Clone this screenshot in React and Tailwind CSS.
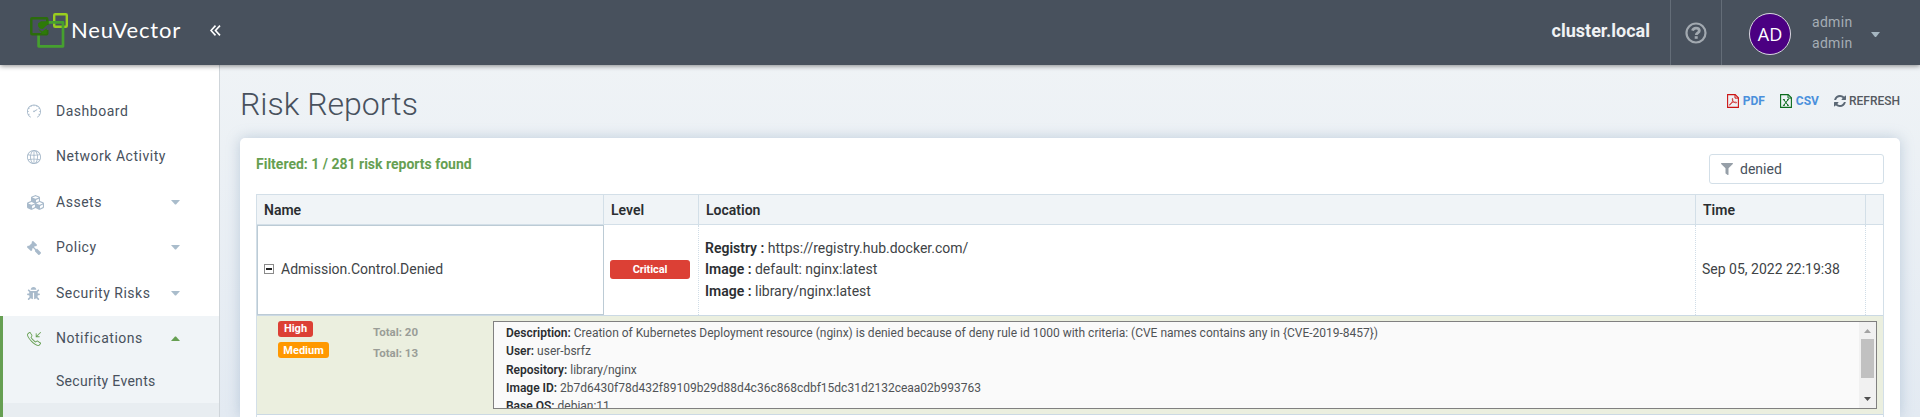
import React from "react";
import { FaCubes, FaGavel, FaBug, FaFilter } from "react-icons/fa";
import { SlSpeedometer, SlGlobe, SlCallIn } from "react-icons/sl";

function Logo() {
  return (
    <svg className="h-[36px] w-[38px] shrink-0" viewBox="0 0 38 36" fill="none">
      <rect x="24.2" y="1.2" width="12.6" height="12.6" rx="1" stroke="#9acd1f" strokeWidth="2.4" />
      <path d="M18 9.3H33V33.3H8.600V22" stroke="#46a02f" strokeWidth="2.7" strokeLinejoin="round" />
      <rect x="1.3" y="5.3" width="16" height="16" rx="0.8" stroke="#2b6c0c" strokeWidth="2.4" />
      <rect x="16" y="12" width="3" height="5" fill="#48515d" />
      <path d="M8 10.5l3-2.200h5.500l2-.6v3l-5.700 5.300-3.200-.4L8 13z" fill="#2d7a08" />
      <path d="M8 15.500l4.200 3 4.600-3.300v5.800h-4.600z" fill="#2d7a08" />
    </svg>
  );
}

function Caret({ up }) {
  return (
    <svg className={up ? "h-[5px] w-[9px] text-[#669f52]" : "h-[5px] w-[9px] text-[#a9bccb]"} viewBox="0 0 9 5">
      <path d={up ? "M0 5L4 0.500h1L9 5z" : "M0 0h9L5 4.500H4z"} fill="currentColor" />
    </svg>
  );
}

function HelpIcon() {
  return (
    <svg className="size-[22px]" viewBox="0 0 22 22" fill="none" stroke="#a2a9b0">
      <circle cx="11" cy="11" r="9.500" strokeWidth="2.2" />
      <path d="M7.500 8.700C8 6.900 9.300 6.100 11 6.100c1.900 0 3.300 1.100 3.300 2.700 0 2-3 2.200-3 4.200" strokeWidth="2.800" />
      <path d="M11.200 14.200v2.600" strokeWidth="3" />
    </svg>
  );
}

function FileIcon({ kind }) {
  const pdf = kind === "pdf";
  return (
    <svg className={pdf ? "mr-[4px] h-[14px] w-[12px] text-[#cc1414]" : "mr-[4px] h-[14px] w-[12px] text-[#0b6b1c]"} viewBox="0 0 12 14" fill="none" stroke="currentColor">
      <path d="M0.600 0.600h7.600l3.200 3.200v9.600H0.600z" strokeWidth="1.1" />
      <path d="M8 0.800v3.300h3.300" strokeWidth="1" />
      {pdf ? (
        <path d="M5.400 4.300c-.4 1 .2 2.500 1.200 3.500s2.100 1.300 3.100 1c.2-.9-2.300-.9-4-.4S2.500 10 2.400 11.200c1 .2 2.500-2.400 3.100-4.200.3-1.100.4-2.400-.1-2.700z" strokeWidth="0.7" />
      ) : (
        <path d="M3.800 5.700l4.200 5.600M8 5.700l-4.200 5.600M2.900 5.700h2M7 5.700h1.900M2.900 11.300h2M7 11.300h1.900" strokeWidth="1" />
      )}
    </svg>
  );
}

function NavItem({ icon, label, caret, up }) {
  return (
    <div className="flex h-[45.5px] items-center">
      <div className={up ? "flex w-[29px] shrink-0 text-[#669f52]" : "flex w-[29px] shrink-0 text-[#a8bacb]"}>{icon}</div>
      <div className="w-[115px] text-[14px] tracking-[0.52px] whitespace-nowrap text-[#48515d]">{label}</div>
      {caret && <Caret up={up} />}
    </div>
  );
}

function Sidebar() {
  return (
    <div className="flex w-[220px] shrink-0 flex-col border-r border-[#cfd5da] bg-white pt-[23.5px]">
      <div className="flex flex-col pl-[27px]">
        <NavItem icon={<SlSpeedometer className="size-[14px]" />} label="Dashboard" />
        <NavItem icon={<SlGlobe className="size-[14px]" />} label="Network Activity" />
        <NavItem icon={<FaCubes className="size-[17px]" />} label="Assets" caret />
        <NavItem icon={<FaGavel className="size-[14px] -scale-x-100" />} label="Policy" caret />
        <NavItem icon={<FaBug className="size-[13px]" />} label="Security Risks" caret />
      </div>
      <div className="flex flex-1 flex-col border-l-[3px] border-[#669f52] bg-[#f0f4f7]">
        <div className="flex h-[87px] flex-col pl-[24px]">
          <NavItem icon={<SlCallIn className="size-[14px]" />} label="Notifications" caret up />
          <div className="pt-[9.500px] pl-[29px] text-[14px] leading-[20px] tracking-[0.3px] text-[#48515d]">Security Events</div>
        </div>
        <div className="flex-1 bg-[#e8edf1]" />
      </div>
    </div>
  );
}

function Header() {
  return (
    <header className="relative z-10 flex h-[65px] shrink-0 bg-[#48515d] shadow-[0_1px_5px_rgba(0,0,0,0.45)]">
      <div className="flex items-start pt-[13px] pl-[30px]">
        <Logo />
        <span className="ml-[3px] pt-[3px] font-[Lato] text-[22px] leading-[28px] tracking-[0.8px] text-white">NeuVector</span>
        <svg className="mt-[12px] ml-[29px] h-[11px] w-[11px]" viewBox="0 0 11 11" fill="none" stroke="#fff" strokeWidth="1.6">
          <path d="M5.500 0.600L1 5.500l4.500 4.900M10 0.600L5.500 5.500 10 10.400" />
        </svg>
      </div>
      <div className="ml-auto flex">
        <div className="flex items-center pr-[20px] pb-[4px] text-[18px] font-bold text-[#f0f2f4]">cluster.local</div>
        <div className="flex w-[52px] items-center border-x border-[#646d78] pl-[14px]">
          <HelpIcon />
        </div>
        <div className="flex w-[198px] pl-[27px]">
          <div className="mt-[13px] flex size-[42px] items-center justify-center rounded-full border border-[#d9d9e0] bg-[#4b0082] font-['Open_Sans'] text-[18px] text-white">AD</div>
          <div className="ml-[21px] pt-[12px] text-[14px] leading-[21px] tracking-[0.3px] text-[#a5adb5]">
            <div>admin</div>
            <div>admin</div>
          </div>
          <svg className="mt-[32px] ml-[19px] h-[5px] w-[9px]" viewBox="0 0 9 5"><path d="M0 0h9L5 5H4z" fill="#a5b5c0" /></svg>
        </div>
      </div>
    </header>
  );
}

function Actions() {
  return (
    <div className="flex items-center pb-[2px] text-[12px] font-medium">
      <FileIcon kind="pdf" />
      <span className="mr-[15px] font-bold text-[#4a90dc]">PDF</span>
      <FileIcon kind="csv" />
      <span className="mr-[15px] font-bold text-[#4a90dc]">CSV</span>
      <svg className="mr-[3px] h-[12px] w-[12px]" viewBox="0 0 1536 1536" fill="#5b6875">
        <path d="M1511 928q0 5-1 7-64 268-268 434.500T764 1536q-146 0-282.500-55T238 1324l-129 129q-19 19-45 19t-45-19-19-45V960q0-26 19-45t45-19h448q26 0 45 19t19 45-19 45l-137 137q71 66 161 102t187 36q134 0 250-65t186-179q11-17 53-117 8-23 30-23h192q13 0 22.500 9.500t9.500 22.500zm25-800v448q0 26-19 45t-45 19h-448q-26 0-45-19t-19-45 19-45l138-138Q969 256 768 256q-134 0-250 65T332 500q-11 17-53 117-8 23-30 23H50q-13 0-22.500-9.500T18 608v-7q65-268 270-434.500T768 0q146 0 284 55.500T1297 212l130-129q19-19 45-19t45 19 19 45z" />
      </svg>
      <span className="text-[#54595f]">REFRESH</span>
    </div>
  );
}

const headCell = "border-r border-[#d3dfe8] pl-[7px]";
const dotCell = "border-r border-dotted border-[#d0dde7]";
const label = "font-semibold text-[#2b2e31]";

function Table() {
  return (
    <div className="mt-[10px] flex flex-1 flex-col border-x border-t border-[#d3dfe8] text-[14px] text-[#404346]">
      <div className="grid h-[30px] shrink-0 grid-cols-[347px_95px_997px_170px_1fr] border-b border-[#d3dfe8] bg-[#f0f4f7] leading-[30px] font-semibold text-[#2b2e31]">
        <div className={headCell}>Name</div>
        <div className={headCell}>Level</div>
        <div className={headCell}>Location</div>
        <div className={headCell}>Time</div>
        <div />
      </div>
      <div className="grid h-[91px] shrink-0 grid-cols-[347px_95px_997px_170px_1fr] border-b border-[#cbd9e4]">
        <div className="flex items-center border border-[#bccbd5] pb-[2px] pl-[6px]">
          <div className="mr-[7px] mb-px flex size-[10px] items-center justify-center border border-[#8a8a8a]">
            <div className="h-[2px] w-[6px] bg-[#222]" />
          </div>
          <span>Admission.Control.Denied</span>
        </div>
        <div className={dotCell + " flex items-center pb-px pl-[6px]"}>
          <div className="h-[19px] w-[80px] rounded-[3px] bg-[#dc4035] text-center text-[11px] leading-[19px] font-bold tracking-[-0.1px] text-white">Critical</div>
        </div>
        <div className={dotCell + " flex flex-col justify-center pl-[6px] leading-[21.5px]"}>
          <div><b className={label}>Registry :</b> https://registry.hub.docker.com/</div>
          <div><b className={label}>Image :</b> default: nginx:latest</div>
          <div><b className={label}>Image :</b> library/nginx:latest</div>
        </div>
        <div className={dotCell + " flex items-center pb-[2px] pl-[6px]"}>Sep 05, 2022 22:19:38</div>
        <div />
      </div>
      <div className="box-content flex h-[98px] shrink-0 border-b border-[#cbd9e4] bg-[#ebefdf]">
        <div className="flex w-[236px] pt-[5px] pl-[21px] text-white">
          <div className="w-[95px] text-[11px] leading-[15px] font-bold">
            <div className="mb-[5px] h-[16px] w-[35px] rounded-[3px] bg-[#dc4035] text-center">High</div>
            <div className="h-[16px] w-[51px] rounded-[3px] bg-[#ff9800] pt-px text-center">Medium</div>
          </div>
          <div className="pt-px text-[11.5px] leading-[21px] font-bold text-[#9a9d97]">
            <div>Total: 20</div>
            <div>Total: 13</div>
          </div>
        </div>
        <div className="mt-[5px] mr-[6px] flex h-[88px] flex-1 overflow-hidden border border-[#808080] bg-[#fafafa]">
          <div className="flex-1 pt-[2px] pl-[12px] text-[12px] leading-[18.3px] text-[#505356]">
            <div><b className={label}>Description:</b> Creation of Kubernetes Deployment resource (nginx) is denied because of deny rule id 1000 with criteria: (CVE names contains any in {"{CVE-2019-8457})"}</div>
            <div><b className={label}>User:</b> user-bsrfz</div>
            <div><b className={label}>Repository:</b> library/nginx</div>
            <div><b className={label}>Image ID:</b> 2b7d6430f78d432f89109b29d88d4c36c868cdbf15dc31d2132ceaa02b993763</div>
            <div><b className={label}>Base OS:</b> debian:11</div>
          </div>
          <div className="flex w-[17px] flex-col items-center bg-[#f1f1f1]">
            <svg className="mt-[7px] h-[4px] w-[7px]" viewBox="0 0 7 4"><path d="M0 4L3.500 0 7 4z" fill="#a3a3a3" /></svg>
            <div className="mt-[6px] h-[39px] w-[13px] bg-[#c1c1c1]" />
            <svg className="mt-[19px] h-[4px] w-[7px]" viewBox="0 0 7 4"><path d="M0 0h7L3.500 4z" fill="#505050" /></svg>
          </div>
        </div>
      </div>
    </div>
  );
}

export default function App() {
  return (
    <div className="flex h-[417px] w-[1920px] flex-col overflow-hidden font-[Roboto,sans-serif]">
      <Header />
      <div className="flex min-h-0 flex-1">
        <Sidebar />
        <main className="flex flex-1 flex-col bg-linear-to-b from-[#eff3f6] to-[#e3eaf2] px-[20px]">
          <div className="flex h-[73px] shrink-0 items-center justify-between">
            <h1 className="pt-[4px] text-[32px] font-light text-[#48515d]">Risk Reports</h1>
            <Actions />
          </div>
          <section className="flex min-h-0 flex-1 flex-col rounded-t-[5px] bg-white px-[16px] pt-[16px] shadow-[0_0_14px_rgba(120,150,180,0.4)]">
            <div className="flex h-[30px] shrink-0 justify-between">
              <div className="text-[14px] leading-[20px] font-bold text-[#669f52]">Filtered: 1 / 281 risk reports found</div>
              <div className="flex w-[175px] items-center rounded-[3px] border border-[#d3dfe8] pl-[11px] text-[14px] text-[#48515d]">
                <FaFilter className="mr-[7px] size-[12px] text-[#969fa8]" />
                denied
              </div>
            </div>
            <Table />
          </section>
        </main>
      </div>
    </div>
  );
}
